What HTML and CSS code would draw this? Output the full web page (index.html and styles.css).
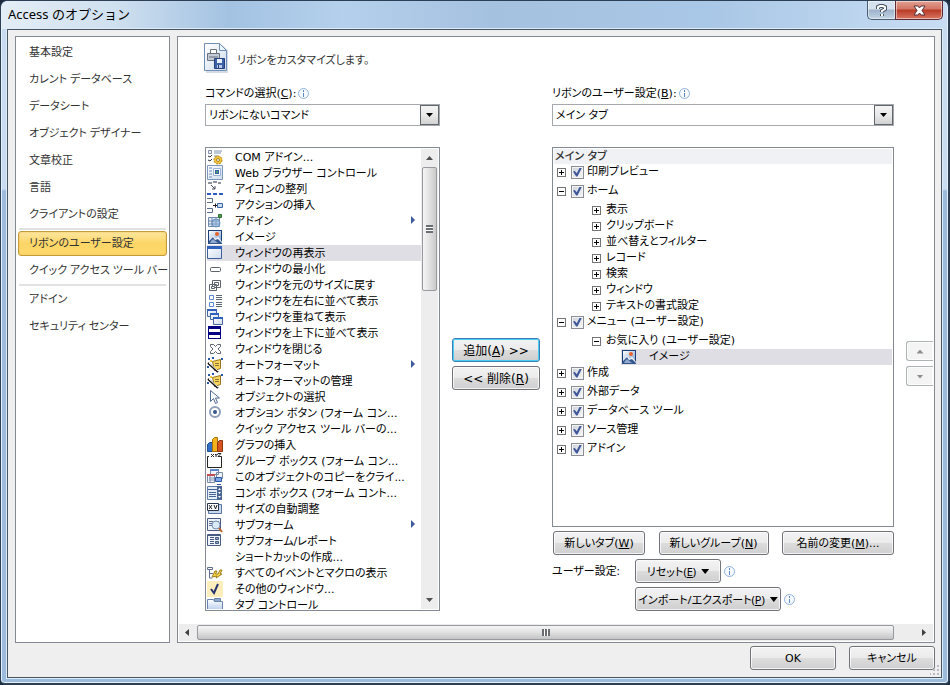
FILE: index.html
```html
<!DOCTYPE html>
<html lang="ja">
<head>
<meta charset="utf-8">
<title>Access のオプション</title>
<link rel="stylesheet" href="styles.css">
</head>
<body>
<svg class="defs" aria-hidden="true">
  <defs>
    <linearGradient id="g-blue" x1="0" y1="0" x2="0" y2="1"><stop offset="0" stop-color="#fff"/><stop offset="1" stop-color="#a9c3e6"/></linearGradient>
    <linearGradient id="g-sky" x1="0" y1="0" x2="1" y2="1"><stop offset="0" stop-color="#fff"/><stop offset="1" stop-color="#7fa3d4"/></linearGradient>
    <linearGradient id="g-page" x1="0" y1="0" x2="1" y2="1"><stop offset="0" stop-color="#fff"/><stop offset="1" stop-color="#cfdcec"/></linearGradient>
    <symbol id="image" viewBox="0 0 16 16"><path fill="#1c3f7c" d="M1 1h14v14H1z"/><path fill="url(#g-sky)" d="M2 2h12v11H2z"/><circle cx="10" cy="5" r="2" fill="#e8622c"/><path fill="#fff" d="M2 11l4-4 3 3 2-2 4 5v1H2z"/><path fill="#35588f" d="M2 12l4-4 2 3 3-1 4 4v1H1z"/><path fill="#90a9cf" d="M4 12l2-2 5 4H3z"/></symbol>
    <symbol id="format" viewBox="0 0 16 16"><path fill="#f6d65c" stroke="#9a7420" d="M5.500 4.500l8-2v9l-6 2z"/><path stroke="#8a7230" d="M8 6.500h4M8 8.500h4"/><path fill="none" stroke="#111" stroke-width="2" d="M1 6l10 9"/><path stroke="#fff" d="M2 6l9 8"/><path fill="#2656a8" d="M1 1h2v2H1zM5 0h2v2H5zM0 9h2v2H0zM14 1h2v2h-2z"/><path fill="#efc53c" d="M3 3h2v2H3z"/></symbol>
    <symbol id="info" viewBox="0 0 11 11"><circle cx="5.500" cy="5.500" r="5" fill="#f6faff" stroke="#8fb2dc"/><path fill="#5b88c4" d="M5 2h1v2H5zM5 5h1v4H5z"/></symbol>
    <symbol id="more" viewBox="0 0 4 8"><path fill="#3d5a99" d="M0 0l4 4-4 4z"/></symbol>
  </defs>
</svg>
<div class="window">
  <header class="titlebar">
    <h1 class="title">Access のオプション</h1>
    <div class="caption">
      <button class="cap help" aria-label="ヘルプ"><svg width="13" height="13" viewBox="0 0 13 13" fill="none"><path d="M3 5V3l2-1h3l2 1v2L7 7v1M7 10v2" stroke="#4a5564" stroke-width="4"/><path d="M3 5V3l2-1h3l2 1v2L7 7v1M7 10v2" stroke="#fff" stroke-width="2"/></svg></button>
      <button class="cap close" aria-label="閉じる"><svg width="13" height="11" viewBox="0 0 13 11"><path fill="#fff" stroke="#563038" d="M1 1h4l1.500 2L8 1h4L9 5.500 12 10H8L6.500 8 5 10H1l3-4.500z"/></svg></button>
    </div>
  </header>
  <div class="client">
    <div class="panes">
      <nav class="sidebar">
        <a href="#" class="nav">基本設定</a>
        <a href="#" class="nav">カレント データベース</a>
        <a href="#" class="nav">データシート</a>
        <a href="#" class="nav">オブジェクト デザイナー</a>
        <a href="#" class="nav">文章校正</a>
        <a href="#" class="nav">言語</a>
        <a href="#" class="nav">クライアントの設定</a>
        <hr class="sep">
        <a href="#" class="nav current">リボンのユーザー設定</a>
        <a href="#" class="nav">クイック アクセス ツール バー</a>
        <hr class="sep">
        <a href="#" class="nav">アドイン</a>
        <a href="#" class="nav">セキュリティ センター</a>
      </nav>
      <main class="main">
        <div class="heading">
          <svg width="24" height="30" viewBox="0 0 24 30"><path fill="#d5dbe4" d="M2 2h22v28H2z"/><path fill="url(#g-page)" stroke="#6f8fb8" d="M.5.500h15l7 7v20H.5z"/><path fill="#fff" d="M16 0h8v7z"/><path fill="#eef4fb" stroke="#6f8fb8" d="M15.500.500v7h7z"/><path fill="#fff" stroke="#65717f" d="M6.500 6.500h6v4h-6z"/><path fill="#c4cbd4" stroke="#65717f" d="M3.500 10.500h12v7h-12z"/><path stroke="#65717f" d="M5 14h9"/><path fill="#3d62a8" stroke="#23407c" d="M10.500 15.500h10v10h-10z"/><path fill="#e8f0fb" d="M13 16h5v4h-5z"/><path fill="#bccce6" d="M13 22h5v3h-5z"/><path fill="#23407c" d="M14 22h1v3h-1z"/></svg>
          <p>リボンをカスタマイズします。</p>
        </div>
        <div class="columns">
          <section class="column">
            <div class="label-row"><label for="source">コマンドの選択(<u>C</u>):</label><svg class="info"><use href="#info"/></svg></div>
            <div class="combo"><select id="source"><option>リボンにないコマンド</option></select><span class="drop"></span></div>
            <div class="list commands">
              <ul class="items" role="listbox" aria-label="コマンド">
                <li role="option"><svg class="ico" viewBox="0 0 16 16"><path fill="#f3f5f9" stroke="#8090a8" d="M1.500 1.500h3v3h-3z"/><path fill="none" stroke="#333" d="M1 7l2 1 2-2M1 11l2 1 2-2"/><path stroke="#7d91ae" d="M7 2h8M7 4h7M7 7h4"/><circle cx="11" cy="11" r="4" fill="#f3c63b" stroke="#a9821b" stroke-dasharray="2 1"/><circle cx="11" cy="11" r="1.500" fill="#fff" stroke="#a9821b"/></svg>COM アドイン...</li>
                <li role="option"><svg class="ico" viewBox="0 0 16 16"><path fill="url(#g-page)" stroke="#7d98bf" d="M.5.500h15v14H.5z"/><path stroke="#6d8cbd" d="M2 3h3M2 6h3M2 9h3M2 12h3"/><path fill="#fff" stroke="#9db3d2" d="M6.500 3.500h7v7h-7z"/><path fill="#2f5d9e" d="M8 5h4v4H8z"/><path fill="#53a070" d="M9 6h2v2H9z"/></svg>Web ブラウザー コントロール</li>
                <li role="option"><svg class="ico" viewBox="0 0 16 16"><path fill="#8f9298" d="M1 1h4v2H1zM6 0h4v2H6zM11 1h3v2h-3z"/><path fill="none" stroke="#444b58" d="M4 4l4 4M8 5v3H5"/><path fill="#2c5cc0" d="M0 12h4v2H0zM6 12h4v2H6zM12 12h4v2h-4z"/></svg>アイコンの整列</li>
                <li role="option"><svg class="ico" viewBox="0 0 16 16"><path fill="#fff" stroke="#5c6e8d" d="M0 1.500h5.500v4H0M0 11.500h5.500v4H0"/><path stroke="#222" d="M6 8.500h4M8.500 6.500v4"/><path fill="#c9daf3" stroke="#3e66a6" d="M10.500 6.500h5v4h-5z"/></svg>アクションの挿入</li>
                <li role="option"><svg class="ico" viewBox="0 0 16 16"><path fill="#e3ebf7" stroke="#7088aa" d="M1.500 4.500h11v9h-11zM1 8h12M1 11h12M5 4v10M9 4v10"/><circle cx="9" cy="10" r="4" fill="#8fb3d9" fill-opacity=".6" stroke="#6c91bd"/><path fill="#4b9a49" stroke="#2f7334" d="M11.500 1.500h3v3h-3z"/></svg>アドイン<svg class="more"><use href="#more"/></svg></li>
                <li role="option"><svg class="ico"><use href="#image"/></svg>イメージ</li>
                <li role="option" class="chosen" aria-selected="true"><svg class="ico" viewBox="0 0 16 16"><path fill="url(#g-page)" stroke="#3e5f99" d="M.5 1.500h14v12H.5z"/><path fill="#2f62bd" d="M0 1h15v3H0z"/></svg>ウィンドウの再表示</li>
                <li role="option"><svg class="ico" viewBox="0 0 16 16"><rect x="3.500" y="6.500" width="10" height="4" rx="1" fill="#fff" stroke="#5b616d"/></svg>ウィンドウの最小化</li>
                <li role="option"><svg class="ico" viewBox="0 0 16 16"><path fill="#fff" stroke="#5b616d" d="M5.500 3.500h8v7h-8zM7.500 5.500h4v3h-4zM2.500 7.500h7v6h-7z"/><path fill="#fff" stroke="#5b616d" d="M4.500 9.500h3v2h-3z"/></svg>ウィンドウを元のサイズに戻す</li>
                <li role="option"><svg class="ico" viewBox="0 0 16 16"><path fill="#fff" stroke="#5b8ad0" d="M2.500 2.500h4v4h-4zM2.500 9.500h4v4h-4z"/><path stroke="#5d6675" d="M9 2.500h6M9 4.500h6M9 6.500h6M9 9.500h6M9 11.500h6M9 13.500h6"/></svg>ウィンドウを左右に並べて表示</li>
                <li role="option"><svg class="ico" viewBox="0 0 16 16"><g fill="url(#g-page)" stroke="#466a9f"><path d="M.5.500h9v7h-9z"/><path d="M3.500 4.500h8v6h-8z"/><path d="M6.500 8.500h9v7h-9z"/></g><path fill="#2f62bd" d="M0 0h10v2H0zM3 4h9v2H3zM6 8h10v2H6z"/></svg>ウィンドウを重ねて表示</li>
                <li role="option"><svg class="ico" viewBox="0 0 16 16"><path fill="#000080" d="M1 1h13v13H1z"/><path fill="#fff" d="M2 4h11v3H2zM2 10h11v3H2z"/></svg>ウィンドウを上下に並べて表示</li>
                <li role="option"><svg class="ico" viewBox="0 0 16 16"><path fill="#fff" stroke="#5b616d" d="M3.500 3.500h3l2 2 2-2h3v2l-2.500 2.500 2.500 2.500v2h-3l-2-2-2 2h-3v-2L6 8 3.500 5.500z"/></svg>ウィンドウを閉じる</li>
                <li role="option"><svg class="ico"><use href="#format"/></svg>オートフォーマット<svg class="more"><use href="#more"/></svg></li>
                <li role="option"><svg class="ico"><use href="#format"/></svg>オートフォーマットの管理</li>
                <li role="option"><svg class="ico" viewBox="0 0 16 16"><path fill="#fff" stroke="#4e6993" d="M3.500 1.500v11l3-3 2 5 2-1-2-4.500h4z"/></svg>オブジェクトの選択</li>
                <li role="option"><svg class="ico" viewBox="0 0 16 16"><circle cx="8" cy="7" r="5" fill="#fff" stroke="#8fa0ba" stroke-width="2"/><circle cx="8" cy="7" r="2" fill="#34568d"/></svg>オプション ボタン (フォーム コン...</li>
                <li role="option"><span class="ico"></span>クイック アクセス ツール バーの...</li>
                <li role="option"><svg class="ico" viewBox="0 0 16 16"><path fill="#2f6fc4" stroke="#1d4b8c" d="M.5 7.500l2-2h3v9h-5z"/><path fill="#f3b21c" stroke="#a9720b" d="M5.500 2.500l2-2h3v14h-5z"/><path fill="#d6541f" stroke="#93340f" d="M10.500 5.500l2-2h3v11h-5z"/></svg>グラフの挿入</li>
                <li role="option"><svg class="ico" viewBox="0 0 16 16"><path fill="none" stroke="#222" d="M2 3.500H.5v11h14v-11H13M4 1l3 3M7 1L4 4M8 1l1 1v2M11 1l-2 1M11 .5h3l-3 3h3"/></svg>グループ ボックス (フォーム コン...</li>
                <li role="option"><svg class="ico" viewBox="0 0 16 16"><path fill="#f1f4fa" stroke="#7788a6" d="M3.500.500h8v5h-8zM.500 5.500h7v8h-7zM9.500 3.500h6v6h-6z"/><path fill="#c44d52" d="M0 5h8v2H0z"/><path fill="#5c86c8" d="M3 0h9v2H3z"/><path stroke="#8094b3" d="M2 9h5M2 11h5M3 7v6"/><path fill="#7ea7e5" stroke="#2c56a0" d="M8.500 8.500h6v4h-6zM10 15.500h4"/></svg>このオブジェクトのコピーをクライ...</li>
                <li role="option"><svg class="ico" viewBox="0 0 16 16"><path fill="#e4ecf8" stroke="#5f7ca9" d="M.5 1.500h14v13H.5z"/><path stroke="#46658f" d="M2 7.500h7M2 9.500h7M2 11.500h7M1 4.500h9"/><path fill="#4b6592" d="M10 1h5v14h-5z"/><path fill="#fff" d="M11 5h3l-1.500-2zM11 7h3l-1.500 2zM11 11h3l-1.500 2z"/></svg>コンボ ボックス (フォーム コント...</li>
                <li role="option"><svg class="ico" viewBox="0 0 16 16"><path fill="#c9d9ee" stroke="#5974a1" d="M1.500 3.500h13v9h-13z"/><path fill="#fff" stroke="#28344b" d="M.5 2.500h11v7H.5z"/><path fill="none" stroke="#222" d="M2 4l3 4M5 4L2 8M7 4l1.500 4L10 4"/></svg>サイズの自動調整</li>
                <li role="option"><svg class="ico" viewBox="0 0 16 16"><path fill="#eef3fa" stroke="#475c80" d="M.5 1.500h13v12H.5z"/><path stroke="#5c6f90" d="M2 4.500h4M2 6.500h4M2 8.500h4M8 4.500h4"/><circle cx="9" cy="8" r="4" fill="#dcebfa" stroke="#7591b5"/><path stroke="#b8642b" stroke-width="2" d="M12 11l3 4"/></svg>サブフォーム<svg class="more"><use href="#more"/></svg></li>
                <li role="option"><svg class="ico" viewBox="0 0 16 16"><path fill="#eef3fa" stroke="#475c80" d="M.5 1.500h13v11H.5zM1 2.500h12"/><path stroke="#475c80" d="M3 4.500h4M3 6.500h4M3 8.500h4M3 10.500h4"/><path fill="#8da3c5" stroke="#475c80" d="M8.500 4.500h3v2h-3zM8.500 8.500h3v2h-3z"/></svg>サブフォーム/レポート</li>
                <li role="option"><span class="ico"></span>ショートカットの作成...</li>
                <li role="option"><svg class="ico" viewBox="0 0 16 16"><path fill="#fff" stroke="#5c6e8d" d="M.5 2.500h5v2h-5zM2.500 5v8h3M3 8.500h3"/><path fill="#f7d94b" stroke="#9c7c18" d="M5 12l3-6h2L8.500 9H11l2-4h2l-2 4h2l-6 4 1-2z"/></svg>すべてのイベントとマクロの表示</li>
                <li role="option"><svg class="ico" viewBox="0 0 16 16"><path fill="#fdeebc" d="M0 0h16v16H0z"/><path fill="none" stroke="#26336f" stroke-width="2" d="M4 8l3 4 4-9"/></svg>その他のウィンドウ...</li>
                <li role="option"><svg class="ico" viewBox="0 0 16 16"><path fill="url(#g-blue)" stroke="#6884ad" d="M.5 2.500h6l1 2h8v11H.5z"/><path fill="#91aacd" stroke="#6884ad" d="M7.500 1.500h6v3h-6z"/></svg>タブ コントロール</li>
              </ul>
              <div class="vscroll" aria-hidden="true"><i class="up"></i><span class="thumb"></span><i class="down"></i></div>
            </div>
          </section>
          <div class="transfer">
            <button class="btn default">追加(<u>A</u>) &gt;&gt;</button>
            <button class="btn">&lt;&lt; 削除(<u>R</u>)</button>
          </div>
          <section class="column">
            <div class="label-row"><label for="target">リボンのユーザー設定(<u>B</u>):</label><svg class="info"><use href="#info"/></svg></div>
            <div class="combo"><select id="target"><option>メイン タブ</option></select><span class="drop"></span></div>
            <div class="list tree">
              <h2 class="tree-head">メイン タブ</h2>
              <div class="row tab"><button class="exp plus" aria-label="展開"></button><label><input type="checkbox" checked>印刷プレビュー</label></div>
              <div class="row tab"><button class="exp" aria-label="折りたたみ"></button><label><input type="checkbox" checked>ホーム</label></div>
              <div class="row group"><button class="exp plus" aria-label="展開"></button>表示</div>
              <div class="row group"><button class="exp plus" aria-label="展開"></button>クリップボード</div>
              <div class="row group"><button class="exp plus" aria-label="展開"></button>並べ替えとフィルター</div>
              <div class="row group"><button class="exp plus" aria-label="展開"></button>レコード</div>
              <div class="row group"><button class="exp plus" aria-label="展開"></button>検索</div>
              <div class="row group"><button class="exp plus" aria-label="展開"></button>ウィンドウ</div>
              <div class="row group"><button class="exp plus" aria-label="展開"></button>テキストの書式設定</div>
              <div class="row tab"><button class="exp" aria-label="折りたたみ"></button><label><input type="checkbox" checked>メニュー (ユーザー設定)</label></div>
              <div class="row group"><button class="exp" aria-label="折りたたみ"></button>お気に入り (ユーザー設定)</div>
              <div class="row leaf"><svg class="ico"><use href="#image"/></svg>イメージ</div>
              <div class="row tab"><button class="exp plus" aria-label="展開"></button><label><input type="checkbox" checked>作成</label></div>
              <div class="row tab"><button class="exp plus" aria-label="展開"></button><label><input type="checkbox" checked>外部データ</label></div>
              <div class="row tab"><button class="exp plus" aria-label="展開"></button><label><input type="checkbox" checked>データベース ツール</label></div>
              <div class="row tab"><button class="exp plus" aria-label="展開"></button><label><input type="checkbox" checked>ソース管理</label></div>
              <div class="row tab"><button class="exp plus" aria-label="展開"></button><label><input type="checkbox" checked>アドイン</label></div>
            </div>
            <div class="tab-actions">
              <button class="btn new-tab">新しいタブ(<u>W</u>)</button>
              <button class="btn new-group">新しいグループ(<u>N</u>)</button>
              <button class="btn rename">名前の変更(<u>M</u>)...</button>
            </div>
            <div class="custom">
              <span class="custom-label">ユーザー設定:</span>
              <div class="custom-row"><button class="btn reset">リセット(<u>E</u>)<i class="caret"></i></button><svg class="info"><use href="#info"/></svg></div>
              <div class="custom-row"><button class="btn port">インポート/エクスポート(<u>P</u>)<i class="caret"></i></button><svg class="info"><use href="#info"/></svg></div>
            </div>
          </section>
          <div class="order">
            <button class="btn move" aria-label="上へ" disabled><i class="up"></i></button>
            <button class="btn move" aria-label="下へ" disabled><i class="down"></i></button>
          </div>
        </div>
        <div class="hscroll" aria-hidden="true"><i class="left"></i><span class="thumb"></span><i class="right"></i></div>
      </main>
    </div>
    <footer class="footer">
      <button class="btn wide">OK</button>
      <button class="btn wide">キャンセル</button>
      <svg class="grip" viewBox="0 0 10 10" width="10" height="10"><path fill="#b8bcc2" d="M7 0h2v2H7zM7 4h2v2H7zM3 4h2v2H3zM7 8h2v2H7zM3 8h2v2H3zM0 8h1v2H0z"/></svg>
    </footer>
  </div>
</div>
</body>
</html>
```

FILE: styles.css
```css
* { box-sizing: border-box; }

body {
  margin: 0;
  background: #1b2a3c;
  color: #000;
  font: 11px/16px "DejaVu Sans", "Noto Sans CJK JP", sans-serif;
  font-feature-settings: "palt";
}

button, select, input { font: inherit; font-feature-settings: inherit; color: inherit; margin: 0; }
h1, h2, p, ul { margin: 0; padding: 0; font: inherit; }
i { display: block; }
.defs { position: absolute; width: 0; height: 0; }

/* Window frame */
.window {
  display: flex;
  flex-direction: column;
  min-height: 100vh;
  padding: 0 6px 5px;
  border: 2px solid #2c3f55;
  border-width: 1px 2px 2px 1px;
  border-radius: 7px 7px 5px 5px;
  background: linear-gradient(#c7dbf0 0, #c9dcf2 188px, #9dbcdd 190px, #9dbcdd 100%);
  box-shadow: inset 0 0 0 1px #e4f1fb;
}

.titlebar {
  display: flex;
  justify-content: space-between;
  align-items: flex-start;
  height: 28px;
  margin: 0 -5px;
  padding-left: 6px;
  border-radius: 6px 6px 0 0;
  background: linear-gradient(90deg, #e3edf6, #cfe0ef 12%, #a3c2e2 24%, #b4d0ec 36%, #a5c1e0 52%, #a9c7e6 75%, #c8ddf3);
}
.title { padding-top: 5px; font: 13px/16px "Noto Sans", "Noto Sans CJK JP", sans-serif; }

.caption { display: flex; margin-right: 4px; }
.cap {
  display: flex;
  align-items: center;
  justify-content: center;
  height: 19px;
  padding: 0;
  border: 1px solid #4b5d73;
  border-top: 0;
  box-shadow: inset 0 0 0 1px rgb(255 255 255 / 50%);
}
.help { width: 28px; border-right: 0; border-radius: 0 0 0 5px; background: linear-gradient(#d5e1ee 45%, #9db2c9 50%, #c3d5e7); }
.close { width: 48px; border-color: #5c2a30; border-radius: 0 0 5px 0; background: linear-gradient(#e2a092 0, #d17564 45%, #b93a25 50%, #d87563); }

.client {
  display: flex;
  flex: 1;
  flex-direction: column;
  padding: 6px 6px 3px 7px;
  border: 1px solid #4a5563;
  background: #efefef;
  box-shadow: 0 0 0 1px #dcebf8;
}

.panes { display: flex; flex: 1; gap: 7px; }

/* Category list */
.sidebar {
  width: 155px;
  padding: 2px;
  border: 1px solid #848a94;
  background: #fff;
  font-family: "Noto Sans", "Noto Sans CJK JP", sans-serif;
}
.nav {
  display: block;
  height: 27px;
  padding: 5px 11px;
  color: #333;
  text-decoration: none;
  white-space: nowrap;
}
.current {
  height: 25px;
  margin: 1px 0;
  padding: 3px 10px;
  border: 1px solid #c29b3a;
  border-radius: 3px;
  background: linear-gradient(#fde7a0, #fcd566 50%, #fdda6c);
  box-shadow: inset 0 0 2px #f3b950;
}
.sep { height: 2px; margin: 0 1px; border: 0; background: #e1e2e4; }

/* Main pane */
.main {
  display: flex;
  flex: 1;
  flex-direction: column;
  min-width: 0;
  padding: 6px 0 1px;
  border: 1px solid #848a94;
  background: #fff;
}
.heading { display: flex; align-items: center; gap: 9px; height: 30px; padding-left: 26px; color: #333; }
.heading p { padding-top: 6px; }

.columns {
  display: grid;
  flex: 1;
  grid-template-columns: 235fr 88px 342fr 28px;
  gap: 12px;
  padding: 12px 0 13px 27px;
}
.column { display: flex; flex-direction: column; min-width: 0; }
.label-row { display: flex; align-items: center; gap: 2px; height: 16px; }
.label-row label { padding-top: 2px; }
.info { width: 11px; height: 11px; }

.combo { position: relative; margin-top: 3px; }
.combo select {
  display: block;
  width: 100%;
  height: 22px;
  padding: 1px 24px 0 3px;
  border: 1px solid #a5a8ad;
  border-radius: 0;
  background: #fff;
  appearance: none;
}
.drop {
  position: absolute;
  top: 1px;
  right: 1px;
  bottom: 1px;
  display: grid;
  place-items: center;
  width: 19px;
  border: 1px solid #62666d;
  background: linear-gradient(#f4f4f4, #e9e9e9 50%, #d2d2d2);
  pointer-events: none;
}
.drop::before, .caret {
  content: "";
  width: 7px;
  height: 4px;
  background: #000;
  clip-path: polygon(0 0, 100% 0, 50% 100%);
}

.list { flex: 1; margin-top: 21px; border: 1px solid #848a94; background: #fff; }
.commands { display: flex; min-height: 464px; padding: 1px; overflow: hidden; contain: size; }
.items { flex: 1; min-width: 0; overflow: hidden; list-style: none; line-height: 18px; }
.items li { display: flex; align-items: flex-start; gap: 12px; height: 16px; white-space: nowrap; }
.ico { flex: none; width: 16px; height: 16px; }
.more { width: 4px; height: 8px; margin: 3px 6px 0 auto; }
.chosen { background: #dfdee4; }

/* Scroll bars */
.vscroll { display: flex; flex-direction: column; align-items: center; width: 17px; background: #ededed; }
.up, .down { width: 7px; height: 4px; background: #505050; clip-path: polygon(50% 0, 100% 100%, 0 100%); }
.down { clip-path: polygon(0 0, 100% 0, 50% 100%); }
.left, .right { width: 4px; height: 7px; background: #404040; clip-path: polygon(100% 0, 100% 100%, 0 50%); }
.right { clip-path: polygon(0 0, 100% 50%, 0 100%); }
.vscroll .up { margin: 7px 0; }
.vscroll .down { margin: auto 0 7px; }
.thumb { display: grid; place-items: center; border: 1px solid #96999e; border-radius: 2px; }
.thumb::before { content: ""; width: 7px; height: 8px; background: repeating-linear-gradient(#6a6d72 0 2px, #fff 2px 3px); }
.vscroll .thumb { width: 15px; height: 124px; background: linear-gradient(90deg, #f5f5f5, #e3e3e3 45%, #cacaca); }
.hscroll { display: flex; align-items: center; height: 17px; margin: 0 1px; padding: 0 7px 0 6px; gap: 8px; background: #ededed; }
.hscroll .thumb { flex: 1; height: 15px; margin-right: 20px; background: linear-gradient(#f5f5f5, #e3e3e3 45%, #c4c4c4); }
.hscroll .thumb::before { width: 8px; height: 7px; background: repeating-linear-gradient(90deg, #6a6d72 0 2px, #fff 2px 3px); }

/* Buttons */
.btn {
  display: flex;
  align-items: center;
  justify-content: center;
  height: 24px;
  padding: 1px 0 0;
  border: 1px solid #707378;
  border-radius: 3px;
  background: linear-gradient(#f3f3f3, #ebebeb 48%, #dcdcdc 52%, #cfcfcf);
  box-shadow: inset 0 0 0 1px rgb(255 255 255 / 75%);
  white-space: pre;
}
.default { border-color: #3a7fb0; box-shadow: inset 0 0 0 1px #48cdf5; }
.transfer { display: flex; flex-direction: column; gap: 4px; padding-top: 253px; font-size: 12px; }
.order { display: flex; flex-direction: column; gap: 5px; padding: 256px 1px 0 0; }
.move { height: 20px; border-color: #adb2b5; border-right: 0; border-radius: 3px 0 0 3px; background: #f4f4f4; }
.move i { background: #8a8d91; }

/* Ribbon tree */
.tree { padding: 1px; }
.tree-head { height: 15px; padding-left: 1px; background: #f0f1f5; color: #333; font-weight: 500; }
.row { display: flex; align-items: center; height: 16px; white-space: nowrap; }
.tab { height: 19px; padding: 0 0 3px 3px; }
.tab label { display: flex; align-items: center; gap: 3px; margin-left: 5px; }
.group { gap: 5px; padding-left: 38px; }
.leaf { gap: 12px; margin-left: 67px; background: #dfdee4; }
.exp {
  width: 9px;
  height: 9px;
  padding: 0;
  border: 1px solid #747474;
  background: linear-gradient(#000, #000) center / 5px 1px no-repeat #fff;
}
.plus {
  background: linear-gradient(#000, #000) center / 5px 1px no-repeat, linear-gradient(#000, #000) center / 1px 5px no-repeat #fff;
}
.row input {
  display: grid;
  place-items: center;
  width: 13px;
  height: 13px;
  border: 1px solid #8a8e94;
  background: linear-gradient(135deg, #cdd2d9, #f6f7f8);
  box-shadow: inset 0 0 0 1px #f4f4f4;
  appearance: none;
}
.row input:checked::before {
  content: "";
  width: 9px;
  height: 9px;
  background: #40589a;
  clip-path: polygon(0 45%, 20% 38%, 42% 65%, 75% 0, 100% 0, 50% 100%, 35% 100%);
}

.tab-actions { display: flex; justify-content: space-between; padding: 4px 0 4px 1px; }
.new-tab { width: 92px; }
.new-group { width: 110px; }
.rename { width: 112px; }

.custom { display: grid; grid-template-columns: 83px 1fr; row-gap: 4px; font-family: "Noto Sans", "Noto Sans CJK JP", sans-serif; }
.custom-label { padding-top: 4px; }
.custom-row { grid-column: 2; display: flex; align-items: center; gap: 3px; }
.caret { flex: none; width: 8px; height: 5px; margin-left: 5px; }
.reset { width: 86px; }
.port { width: 146px; }

.footer { position: relative; display: flex; justify-content: flex-end; gap: 13px; padding: 3px 0 4px; }
.wide { width: 86px; }
.grip { position: absolute; right: -5px; bottom: -1px; }
```
